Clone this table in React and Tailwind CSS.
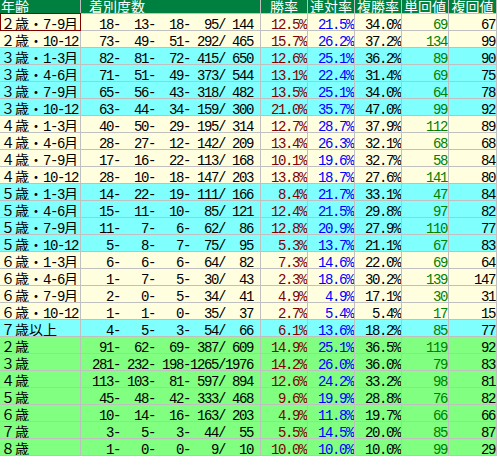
import React from "react";

const rows = [
  ["２歳・7-9月", [18, 13, 18, 95, 144], "12.5", "21.5", "34.0", 69, 67, "y"],
  ["２歳・10-12", [73, 49, 51, 292, 465], "15.7", "26.2", "37.2", 134, 99, "y"],
  ["３歳・1-3月", [82, 81, 72, 415, 650], "12.6", "25.1", "36.2", 89, 90, "c"],
  ["３歳・4-6月", [71, 51, 49, 373, 544], "13.1", "22.4", "31.4", 69, 75, "c"],
  ["３歳・7-9月", [65, 56, 43, 318, 482], "13.5", "25.1", "34.0", 64, 78, "c"],
  ["３歳・10-12", [63, 44, 34, 159, 300], "21.0", "35.7", "47.0", 99, 92, "c"],
  ["４歳・1-3月", [40, 50, 29, 195, 314], "12.7", "28.7", "37.9", 112, 89, "y"],
  ["４歳・4-6月", [28, 27, 12, 142, 209], "13.4", "26.3", "32.1", 68, 68, "y"],
  ["４歳・7-9月", [17, 16, 22, 113, 168], "10.1", "19.6", "32.7", 58, 84, "y"],
  ["４歳・10-12", [28, 10, 18, 147, 203], "13.8", "18.7", "27.6", 141, 80, "y"],
  ["５歳・1-3月", [14, 22, 19, 111, 166], "8.4", "21.7", "33.1", 47, 84, "c"],
  ["５歳・4-6月", [15, 11, 10, 85, 121], "12.4", "21.5", "29.8", 97, 82, "c"],
  ["５歳・7-9月", [11, 7, 6, 62, 86], "12.8", "20.9", "27.9", 110, 77, "c"],
  ["５歳・10-12", [5, 8, 7, 75, 95], "5.3", "13.7", "21.1", 67, 83, "c"],
  ["６歳・1-3月", [6, 6, 6, 64, 82], "7.3", "14.6", "22.0", 69, 64, "y"],
  ["６歳・4-6月", [1, 7, 5, 30, 43], "2.3", "18.6", "30.2", 139, 147, "y"],
  ["６歳・7-9月", [2, 0, 5, 34, 41], "4.9", "4.9", "17.1", 30, 31, "y"],
  ["６歳・10-12", [1, 1, 0, 35, 37], "2.7", "5.4", "5.4", 17, 15, "y"],
  ["７歳以上", [4, 5, 3, 54, 66], "6.1", "13.6", "18.2", 85, 77, "c"],
  ["２歳", [91, 62, 69, 387, 609], "14.9", "25.1", "36.5", 119, 92, "g"],
  ["３歳", [281, 232, 198, 1265, 1976], "14.2", "26.0", "36.0", 79, 83, "g"],
  ["４歳", [113, 103, 81, 597, 894], "12.6", "24.2", "33.2", 98, 81, "g"],
  ["５歳", [45, 48, 42, 333, 468], "9.6", "19.9", "28.8", 76, 82, "g"],
  ["６歳", [10, 14, 16, 163, 203], "4.9", "11.8", "19.7", 66, 66, "g"],
  ["７歳", [3, 5, 3, 44, 55], "5.5", "14.5", "20.0", 85, 87, "g"],
  ["８歳", [1, 0, 0, 9, 10], "10.0", "10.0", "10.0", 99, 29, "g"],
];

const BG = { y: "bg-[#ffffe0]", c: "bg-[#80ffff]", g: "bg-[#80ff80]" };

const p4 = (n) => String(n).padStart(4, " ");
const counts = (a) => `${p4(a[0])}-${p4(a[1])}-${p4(a[2])}-${p4(a[3])}/${p4(a[4])}`;

const MONO = "font-['Liberation_Mono',monospace] text-[14px] tracking-[-1.4px]";

function Label({ text }) {
  const parts = text.split(/([\x20-\x7e]+)/).filter(Boolean);
  return (
    <>
      {parts.map((s, i) =>
        /^[\x20-\x7e]+$/.test(s) ? (
          <span key={i} className={MONO}>
            {s}
          </span>
        ) : (
          <span key={i}>{s}</span>
        )
      )}
    </>
  );
}

const numCell = "min-h-0 overflow-hidden whitespace-pre text-right pt-[3px] leading-[16px] " + MONO;
const headCell =
  "min-h-0 overflow-hidden bg-[#008040] text-white text-[14px] leading-[13px] font-['Noto_Sans_CJK_JP',sans-serif] whitespace-nowrap";

export default function App() {
  return (
    <div className="bg-white w-[498px] h-[457px] overflow-hidden">
      <div className="grid w-[497px] grid-cols-[80px_179px_46px_46px_46px_46px_47px] grid-rows-[13px_repeat(26,16px)] gap-px bg-[#c0c0c0] pr-px pb-px">
        <div className={headCell + " pl-px"}>年齢</div>
        <div className={headCell + " pl-[8px]"}>着別度数</div>
        <div className={headCell + " text-center"}>勝率</div>
        <div className={headCell + " text-center"}>連対率</div>
        <div className={headCell + " text-center"}>複勝率</div>
        <div className={headCell + " text-center"}>単回値</div>
        <div className={headCell + " text-center"}>複回値</div>
        {rows.map((r, i) => {
          const bg = BG[r[7]];
          return (
            <React.Fragment key={i}>
              <div
                className={
                  bg +
                  " relative min-h-0 whitespace-pre pl-px pt-px leading-[16px] text-[14px] text-black font-['Noto_Sans_CJK_JP',sans-serif]"
                }
              >
                <div className="h-[15px] overflow-hidden">
                  <Label text={r[0]} />
                </div>
                {i === 0 && (
                  <span className="pointer-events-none absolute left-0 -top-px -right-px -bottom-px border border-[#800000]" />
                )}
              </div>
              <div className={bg + " " + numCell + " pr-[7px] text-black"}>{counts(r[1])}</div>
              <div className={bg + " " + numCell + " pr-[1px] text-[#800000]"}>{r[2]}%</div>
              <div className={bg + " " + numCell + " pr-[1px] text-[#0000ff]"}>{r[3]}%</div>
              <div className={bg + " " + numCell + " pr-[1px] text-black"}>{r[4]}%</div>
              <div className={bg + " " + numCell + " pr-[1px] text-[#008000]"}>{r[5]}</div>
              <div className={bg + " " + numCell + " pr-[1px] text-black"}>{r[6]}</div>
            </React.Fragment>
          );
        })}
      </div>
    </div>
  );
}
